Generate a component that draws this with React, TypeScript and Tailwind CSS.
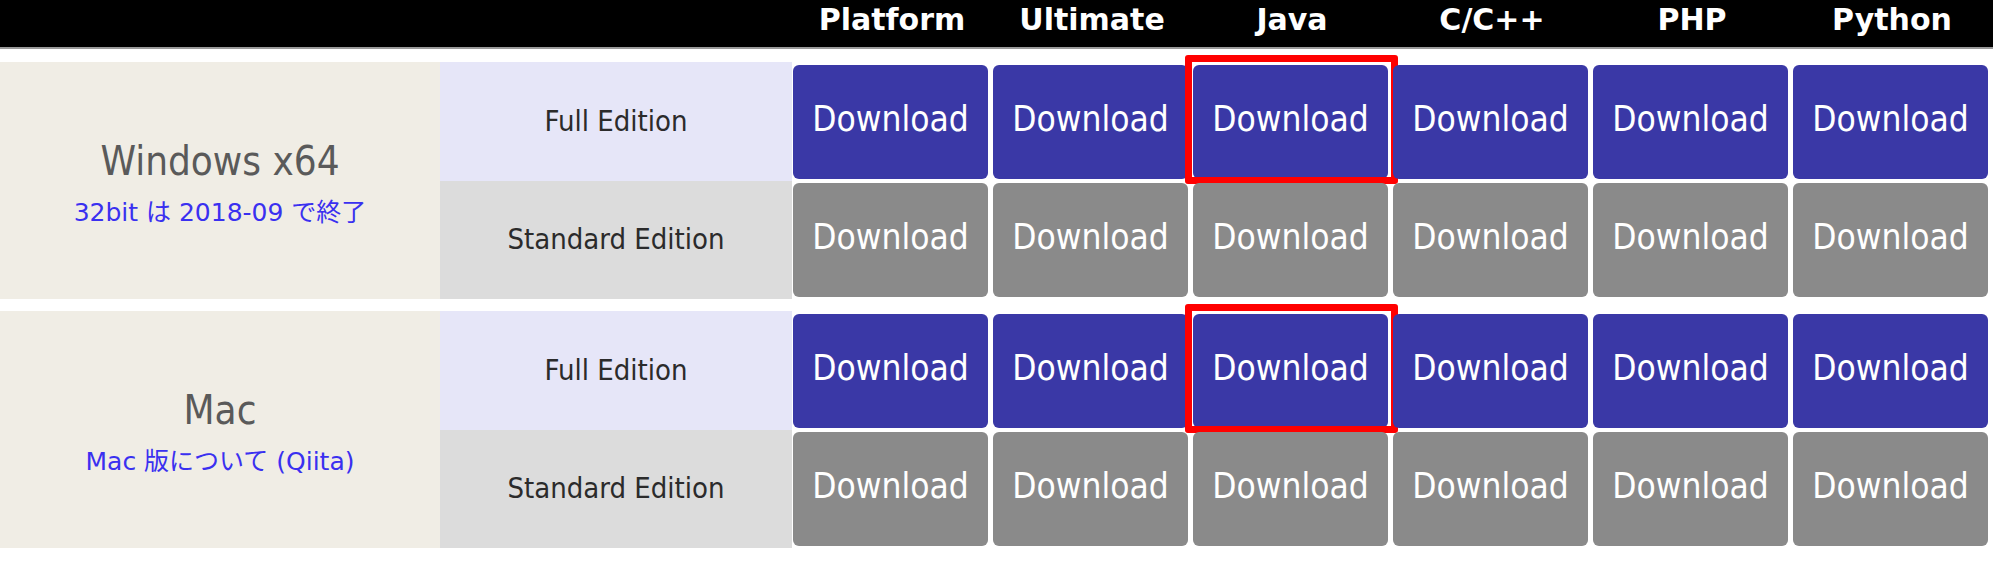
import React from "react";

const langs = ["Platform", "Ultimate", "Java", "C/C++", "PHP", "Python"];

const platforms = [
  { name: "Windows x64", note: "32bit は 2018-09 で終了" },
  { name: "Mac", note: "Mac 版について (Qiita)" },
];

// highlighted column (red frame around the Full Edition button)
const marked = "Java";

const DownloadButton = ({ full, mark }: { full: boolean; mark: boolean }) => {
  return (
    <div className="relative">
      <a
        href="#"
        className={`flex h-full items-center justify-center rounded-[6px] pb-[5px] text-[35px] text-white ${
          full ? "bg-[#3a38a6]" : "bg-[#8a8a8a]"
        }`}
      >
        Download
      </a>
      {mark && (
        <div className="absolute -left-[8px] -right-[10px] -top-[10px] -bottom-[5px] rounded-[3px] border-[7px] border-[#ff0000]" />
      )}
    </div>
  );
};

export default function App() {
  return (
    <div className="h-[561px] w-[1999px] bg-white font-['DejaVu_Sans_Condensed','DejaVu_Sans','Noto_Sans_CJK_JP',sans-serif]">
      <div className="w-[1993px]">
        {/* header */}
        <div className="flex h-[49px] border-b-2 border-[#9a9a9a] bg-black">
          <div className="w-[792px]" />
          <div className="grid w-[1200px] grid-cols-6">
            {langs.map((l) => (
              <div
                key={l}
                className="pt-[2px] text-center font-['DejaVu_Sans',sans-serif] text-[30px] font-bold leading-[36px] text-white"
              >
                {l}
              </div>
            ))}
          </div>
        </div>

        {/* platform rows */}
        {platforms.map((p, i) => (
          <div key={p.name} className={`flex h-[237px] ${i === 0 ? "mt-[13px]" : "mt-[12px]"}`}>
            <div className="flex w-[440px] flex-col items-center justify-center bg-[#f0ede5] pt-[3px]">
              <p className="text-[40px] leading-[50px] text-[#5a5a5a]">{p.name}</p>
              <p className="mt-[11px] font-['DejaVu_Sans','Noto_Sans_CJK_JP',sans-serif] text-[25px] leading-[32px] text-[#3a30f0]">
                {p.note}
              </p>
            </div>

            <div className="flex w-[352px] flex-col text-[29px] text-[#2b2b2b]">
              <div className="flex h-[119px] items-center justify-center bg-[#e6e6f8]">Full Edition</div>
              <div className="flex flex-1 items-center justify-center bg-[#dcdcdc]">Standard Edition</div>
            </div>

            <div className="grid w-[1201px] grid-cols-[repeat(6,195px)] grid-rows-[114px_114px] gap-x-[5px] gap-y-[4px] pl-[1px] pt-[3px]">
              {langs.map((l) => (
                <DownloadButton key={"f" + l} full mark={l === marked} />
              ))}
              {langs.map((l) => (
                <DownloadButton key={"s" + l} full={false} mark={false} />
              ))}
            </div>
          </div>
        ))}
      </div>
    </div>
  );
}
